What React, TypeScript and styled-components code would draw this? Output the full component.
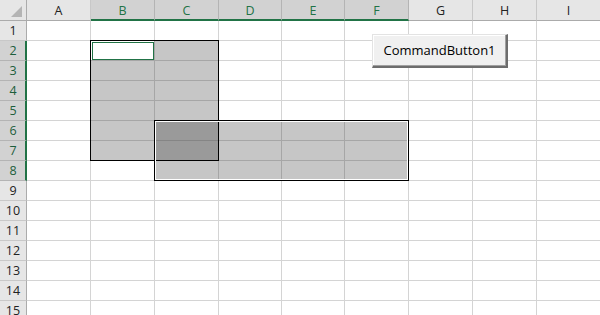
import { Fragment } from 'react'
import styled, { createGlobalStyle } from 'styled-components'

const GlobalStyles = createGlobalStyle`
  html, body {
    margin: 0;
    padding: 0;
    background: #ffffff;
    overflow: hidden;
  }
  * {
    box-sizing: border-box;
  }
`

const ROW_HEADER_W = 27
const HEADER_H = 21
const ROW_H = 20
const ROW_COUNT = 15

const columns = [
  { label: 'A', width: 64 },
  { label: 'B', width: 64 },
  { label: 'C', width: 64 },
  { label: 'D', width: 63 },
  { label: 'E', width: 63 },
  { label: 'F', width: 64 },
  { label: 'G', width: 64 },
  { label: 'H', width: 64 },
  { label: 'I', width: 64 },
]

type Range = { c0: number; c1: number; r0: number; r1: number; inner?: boolean }

// B2:C7 and C6:F8
const ranges: Range[] = [
  { c0: 1, c1: 2, r0: 2, r1: 7 },
  { c0: 2, c1: 5, r0: 6, r1: 8, inner: true },
]
const active = { c: 1, r: 2 }

const green = '#217346'
const fills = ['#ffffff', '#c6c6c6', '#9a9a9a']
const lines = ['#d4d4d4', '#a6a6a6', '#858585']

const Sheet = styled.div`
  position: relative;
  display: grid;
  grid-template-columns: ${ROW_HEADER_W}px ${columns.map(c => `${c.width}px`).join(' ')};
  grid-template-rows: ${HEADER_H}px repeat(${ROW_COUNT}, ${ROW_H}px);
  width: 600px;
  height: 315px;
  overflow: hidden;
  font-family: 'Open Sans', 'Liberation Sans', sans-serif;
`

const Corner = styled.div`
  position: relative;
  background: #e6e6e6;
  border-right: 1px solid #ababab;
  border-bottom: 1px solid #ababab;
`

const CornerTriangle = styled.div`
  position: absolute;
  right: 4px;
  bottom: 3px;
  width: 0;
  height: 0;
  border-left: 11px solid transparent;
  border-bottom: 11px solid #b4b4b4;
`

const ColHeader = styled.div<{ $selected: boolean }>`
  display: flex;
  align-items: center;
  justify-content: center;
  font-size: 12.5px;
  padding-top: ${({ $selected }) => ($selected ? '1px' : '0')};
  color: ${({ $selected }) => ($selected ? green : '#222222')};
  background: ${({ $selected }) => ($selected ? '#d2d2d2' : '#e6e6e6')};
  border-right: 1px solid ${({ $selected }) => ($selected ? '#b4b4b4' : '#c8c8c8')};
  border-bottom: ${({ $selected }) => ($selected ? `2px solid ${green}` : '1px solid #ababab')};
`

const RowHeader = styled.div<{ $selected: boolean }>`
  display: flex;
  align-items: center;
  justify-content: center;
  font-size: 12.5px;
  padding-left: ${({ $selected }) => ($selected ? '1px' : '0')};
  color: ${({ $selected }) => ($selected ? '#1c5e3b' : '#222222')};
  background: ${({ $selected }) => ($selected ? '#d2d2d2' : '#e6e6e6')};
  border-bottom: 1px solid ${({ $selected }) => ($selected ? '#b4b4b4' : '#c8c8c8')};
  border-right: ${({ $selected }) => ($selected ? `2px solid ${green}` : '1px solid #ababab')};
`

const Cell = styled.div<{ $fill: number; $line: number }>`
  background: ${({ $fill }) => fills[$fill]};
  border-right: 1px solid ${({ $line }) => lines[$line]};
  border-bottom: 1px solid ${({ $line }) => lines[$line]};
`

const ActiveBox = styled.div`
  margin: 1px 0 0 1px;
  height: calc(100% - 1px);
  border: 1px solid ${green};
`

const SelectionFrame = styled.div<{ $inner?: boolean }>`
  position: absolute;
  border: 1px solid #000000;
  box-shadow: ${({ $inner }) => ($inner ? 'inset 0 0 0 1px #ffffff' : 'none')};
  pointer-events: none;
`

const CommandButton = styled.button`
  position: absolute;
  left: 372px;
  top: 34px;
  width: 136px;
  height: 34px;
  padding: 0 0 1px;
  background: #f0f0f0;
  color: #000000;
  font-family: 'Open Sans', 'Liberation Sans', sans-serif;
  font-size: 13px;
  border-top: 1px solid #e3e3e3;
  border-left: 1px solid #e3e3e3;
  border-right: 2px solid #6d6d6d;
  border-bottom: 2px solid #6d6d6d;
  box-shadow: inset -1px -1px 0 #a0a0a0, inset 1px 1px 0 #ffffff;
`

const inRange = (r: Range, c: number, row: number) =>
  c >= r.c0 && c <= r.c1 && row >= r.r0 && row <= r.r1

const colLeft = (c: number) =>
  ROW_HEADER_W + columns.slice(0, c).reduce((s, col) => s + col.width, 0)

function App() {
  const selectedCols = new Set<number>()
  const selectedRows = new Set<number>()
  ranges.forEach(r => {
    for (let c = r.c0; c <= r.c1; c++) selectedCols.add(c)
    for (let row = r.r0; row <= r.r1; row++) selectedRows.add(row)
  })

  const rows = Array.from({ length: ROW_COUNT }, (_, i) => i + 1)

  return (
    <>
      <GlobalStyles />
      <Sheet>
        <Corner>
          <CornerTriangle />
        </Corner>
        {columns.map((col, c) => (
          <ColHeader key={col.label} $selected={selectedCols.has(c)}>
            {col.label}
          </ColHeader>
        ))}

        {rows.map(row => (
          <Fragment key={row}>
            <RowHeader $selected={selectedRows.has(row)}>{row}</RowHeader>
            {columns.map((col, c) => {
              const level = ranges.filter(r => inRange(r, c, row)).length
              const isActive = active.c === c && active.r === row
              return (
                <Cell key={col.label} $fill={isActive ? 0 : level} $line={level}>
                  {isActive && <ActiveBox />}
                </Cell>
              )
            })}
          </Fragment>
        ))}

        {ranges.map((r, i) => {
          const left = colLeft(r.c0) - 1
          const width = colLeft(r.c1 + 1) - colLeft(r.c0) + 1
          const top = HEADER_H + (r.r0 - 1) * ROW_H - 1
          const height = (r.r1 - r.r0 + 1) * ROW_H + 1
          return (
            <SelectionFrame key={i} $inner={r.inner} style={{ left, top, width, height }} />
          )
        })}

        <CommandButton>CommandButton1</CommandButton>
      </Sheet>
    </>
  )
}

export default App
